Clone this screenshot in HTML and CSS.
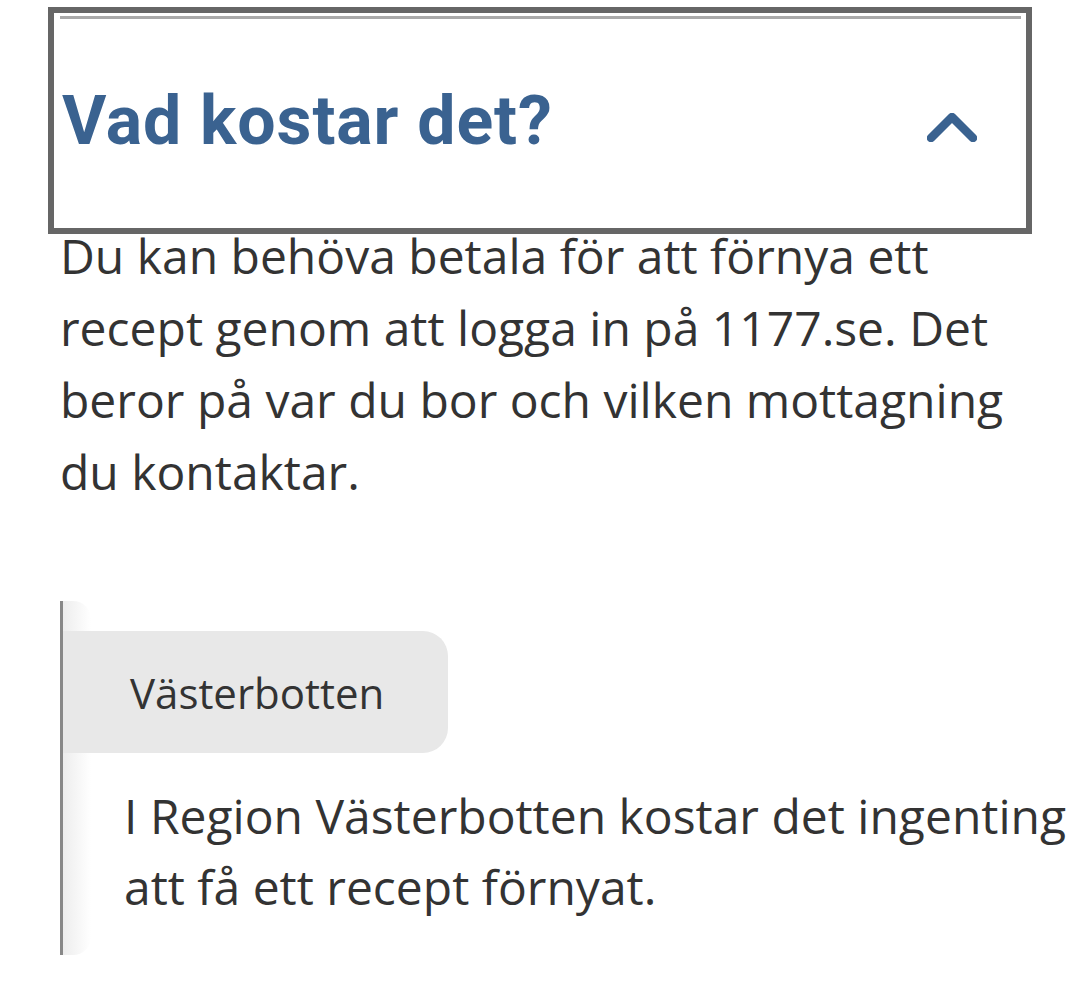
FILE: index.html
```html
<!DOCTYPE html>
<html lang="sv">
<head>
<meta charset="utf-8">
<title>Vad kostar det?</title>
<link rel="stylesheet" href="styles.css">
</head>
<body>
<div class="page">
  <div class="acc-head">
    <div class="acc-line"></div>
    <div class="acc-row">
      <h2 class="acc-title">Vad kostar det?</h2>
      <svg class="chevron" width="50" height="29" viewBox="0 0 50 29" aria-hidden="true">
        <polyline points="4,25 25,4 46,25" fill="none" stroke="#3a6290" stroke-width="8.5" stroke-linecap="round" stroke-linejoin="round"/>
      </svg>
    </div>
  </div>
  <div class="acc-body">
    <p class="lead">Du kan behöva betala för att förnya ett recept genom att logga in på 1177.se. Det beror på var du bor och vilken mottagning du kontaktar.</p>
    <div class="region">
      <div class="tab">Västerbotten</div>
      <p class="region-text">I Region Västerbotten kostar det ingenting att få ett recept förnyat.</p>
    </div>
  </div>
</div>
</body>
</html>
```

FILE: styles.css
```css
html, body {
  margin: 0;
  padding: 0;
  background: #ffffff;
}

.page {
  width: 1080px;
  font-family: "Open Sans", "Liberation Sans", sans-serif;
  color: #333333;
}

.acc-head {
  box-sizing: border-box;
  margin: 7px 0 0 48px;
  width: 984px;
  height: 227px;
  border: 6px solid #666666;
  display: flex;
  flex-direction: column;
}

.acc-line {
  height: 3px;
  margin: 3px 5px 0 6px;
  background: #a9a9a9;
}

.acc-row {
  flex: 1;
  display: flex;
  align-items: center;
  justify-content: space-between;
  padding: 0 49px 0 8px;
}

.acc-title {
  margin: 0;
  font-family: Roboto, "Liberation Sans", Arial, sans-serif;
  font-weight: 700;
  font-size: 68px;
  line-height: 1;
  letter-spacing: 0.9px;
  color: #3a6290;
  position: relative;
  top: -3px;
}

.chevron {
  display: block;
  margin-top: 8px;
}

.acc-body {
  padding-left: 57px;
}

.lead {
  margin: -14px 0 0 3px;
  width: 962px;
  font-size: 48px;
  line-height: 72px;
}

.region {
  position: relative;
  z-index: 0;
  margin: 93px 0 0 3px;
  border-left: 3px solid #888888;
  padding: 30px 0 33px 0;
}

.region::before {
  content: "";
  position: absolute;
  z-index: -1;
  left: 0;
  top: 0;
  bottom: 0;
  width: 28px;
  border-radius: 0 18px 18px 0;
  background: linear-gradient(90deg, #ededed, #ffffff);
}

.tab {
  box-sizing: border-box;
  width: 385px;
  height: 122px;
  display: flex;
  align-items: center;
  padding-left: 67px;
  background: #e8e8e8;
  border-radius: 0 25px 25px 0;
  font-size: 42px;
  color: #333333;
}

.region-text {
  margin: 27px 0 0 0;
  padding-left: 61px;
  font-size: 48px;
  line-height: 71px;
}
```
